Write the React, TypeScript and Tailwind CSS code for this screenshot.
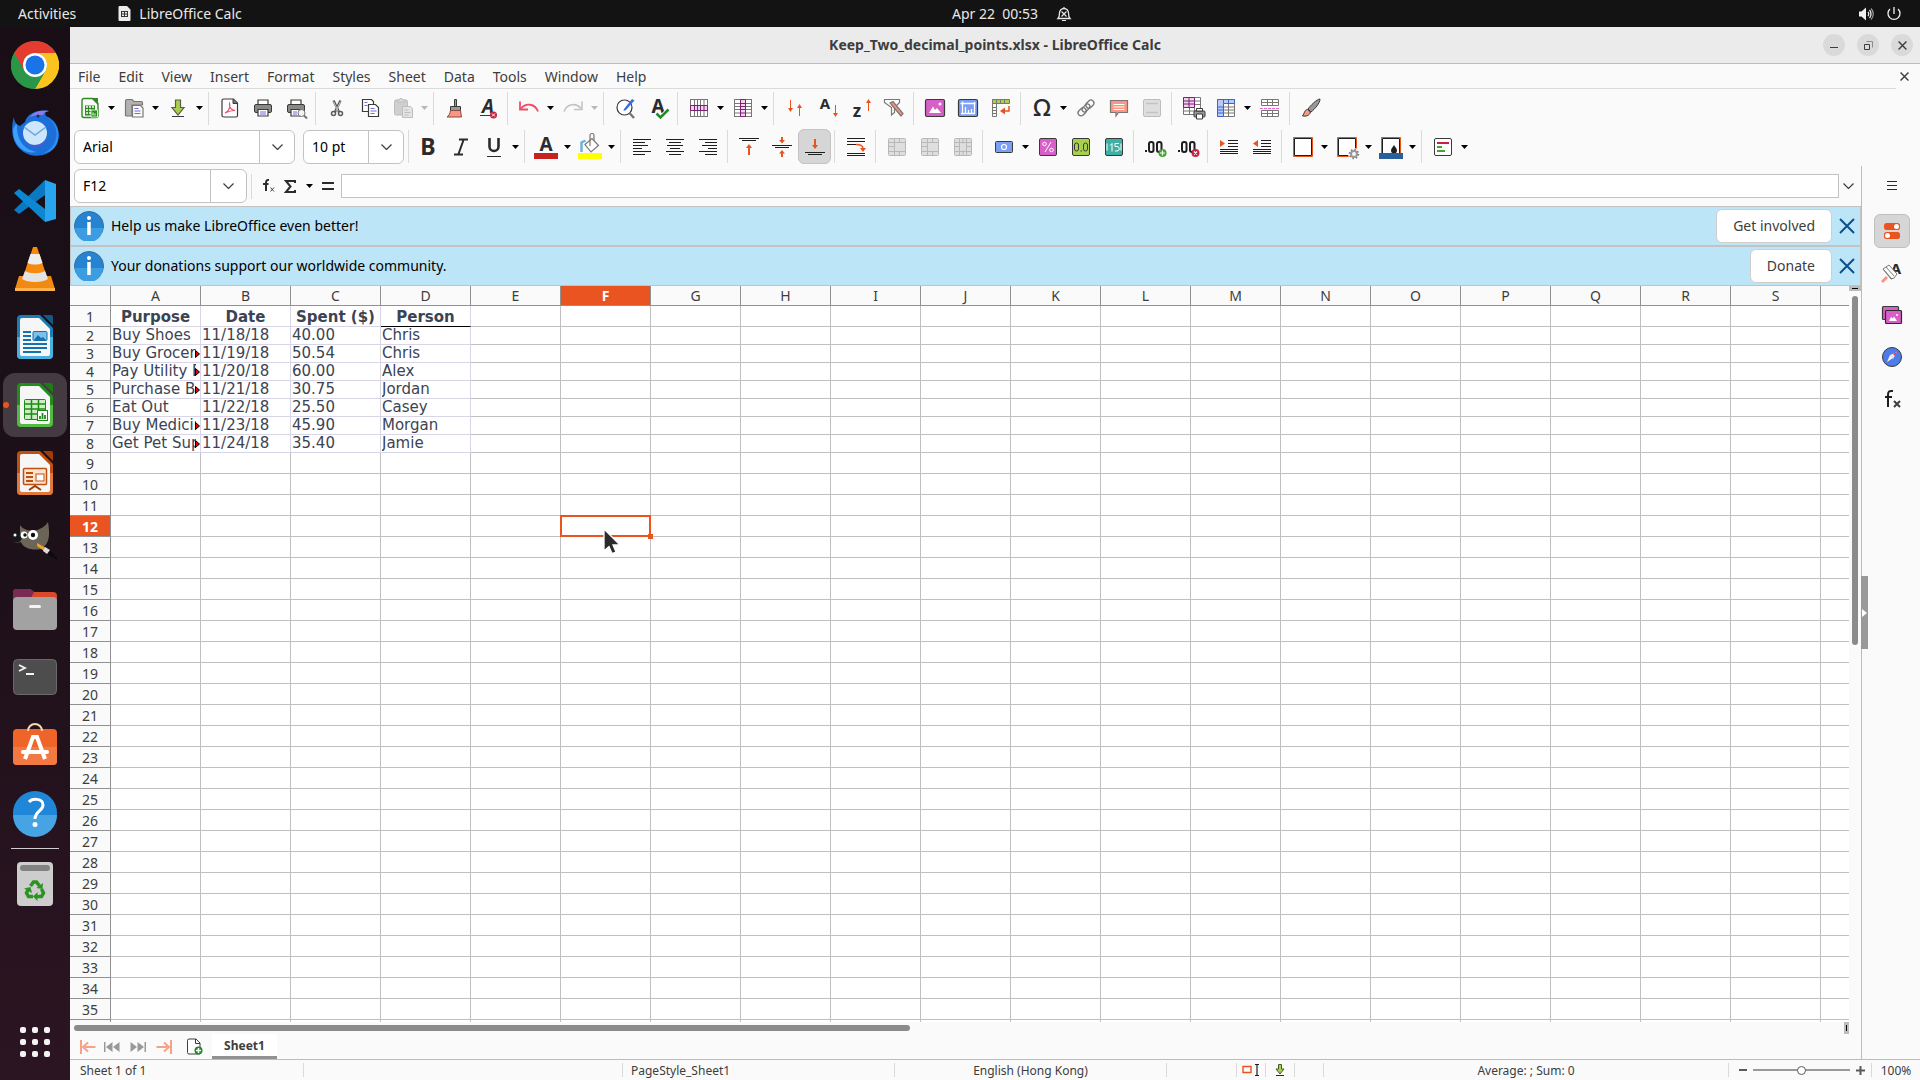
import { useState } from 'react';
import type { ReactNode } from 'react';
import { clsx } from 'clsx';

type IconProps = { children: ReactNode; size?: number };

function Icon({ children, size = 24 }: IconProps) {
  return (
    <svg width={size} height={size} viewBox="0 0 24 24" fill="none" aria-hidden="true" className="shrink-0 overflow-visible">
      {children}
    </svg>
  );
}

const DARK = '#3a3a38';
const MID = '#797774';
const RED = '#e9531f';

function Glyph({ x, y, size, children, fill = '#2b2b2b', italic = false, weight = 700 }: {
  x: number; y: number; size: number; children: ReactNode; fill?: string; italic?: boolean; weight?: number;
}) {
  return (
    <text
      x={x}
      y={y}
      fontSize={size}
      fill={fill}
      fontWeight={weight}
      fontStyle={italic ? 'italic' : 'normal'}
      textAnchor="middle"
      fontFamily="Noto Sans, sans-serif"
    >
      {children}
    </text>
  );
}

/* ---------- toolbar icons ---------- */

const icons = {
  newDoc: (
    <Icon>
      <path d="M6 2.500h9l5 5v12a2 2 0 0 1-2 2H6a2 2 0 0 1-2-2v-15a2 2 0 0 1 2-2z" fill="#fafafa" stroke="#2e8b20" strokeWidth="1.400" />
      <path d="M13 2h7v7z" fill="#2e8b20" />
      <path d="M7 9.500h10v10H7z" fill="#2e8b20" />
      <path d="M8 11h2m1 0h2m1 0h2M8 14h2m1 0h2m-5 3h2m1 0h2" stroke="#fff" strokeWidth="1.500" />
      <path d="M13 14h6.500v7H13z" fill="#2e8b20" stroke="#fff" strokeWidth=".8" />
      <path d="M15 19.500v-3m2 3v-2" stroke="#fff" />
    </Icon>
  ),
  open: (
    <Icon>
      <path d="M3.500 20V5c0-1 .5-1.500 1.500-1.500h5l2 2h7c1 0 1.500.5 1.500 1.500v2H10v11H5c-1 0-1.500-.5-1.500-1z" fill="#b3b1ae" stroke={MID} strokeWidth="1.200" />
      <path d="M10.500 9.500h8l2.500 2.500v9H10.500z" fill="#fafafa" stroke={MID} strokeWidth="1.200" />
      <path d="M12.500 12.500h4m-4 2.500h6m-6 2.500h6" stroke="#6e6edb" />
    </Icon>
  ),
  save: (
    <Icon>
      <path d="M9.500 4h5v7.500H18L12 19l-6-7.500h3.500z" fill="#a7d14c" stroke="#5b5b4a" strokeWidth="1.200" />
      <path d="M6 20.500h12" stroke={DARK} />
    </Icon>
  ),
  pdf: (
    <Icon>
      <path d="M5.500 3h10l4 4v12.500c0 1-.5 1.500-1.500 1.500H6c-1 0-2-.5-2-1.500V4.500C4 3.500 4.500 3 5.500 3z" fill="#fff" stroke={DARK} strokeWidth="1.200" />
      <path d="M15 3v4.500h4.500" fill="#777" stroke={DARK} />
      <path d="M7 17c3-1 6-6 4.500-9.500C11 11 13 14 17 14.500c-4 0-7 1-10 2.500z" stroke="#ee4d68" strokeWidth="1.200" />
    </Icon>
  ),
  print: (
    <Icon>
      <path d="M7 9V4h10v5" fill="#fff" stroke={DARK} strokeWidth="1.200" />
      <rect x="3.500" y="8.500" width="17" height="8" rx="1.500" fill="#8b8987" stroke={DARK} />
      <path d="M7 13.500h10V20H7z" fill="#fff" stroke={DARK} strokeWidth="1.200" />
      <path d="M9 16h6m-6 2h6" stroke="#6e6edb" />
    </Icon>
  ),
  preview: (
    <Icon>
      <path d="M7 9V4h10v5" fill="#fff" stroke={DARK} strokeWidth="1.200" />
      <rect x="3.500" y="8.500" width="17" height="8" rx="1.500" fill="#8b8987" stroke={DARK} />
      <path d="M7 13.500h10V20H7z" fill="#fff" stroke={DARK} strokeWidth="1.200" />
      <path d="M9 16h4m-4 2h4" stroke="#6e6edb" />
      <circle cx="17.500" cy="17" r="3.500" fill="#f4f4f4" stroke={MID} />
      <path d="m20 19.500 3 3" stroke={MID} strokeWidth="2" />
    </Icon>
  ),
  cut: (
    <Icon>
      <path d="M8.500 4.500 14 16m1.500-11.500L10 16" stroke="#5a5956" strokeWidth="2.400" />
      <path d="M8.500 5.500 13 15m2.500-9.500L11 15" stroke="#dedcd8" strokeWidth=".8" />
      <circle cx="8.500" cy="17.500" r="2" stroke="#5a5956" strokeWidth="1.500" />
      <circle cx="15.500" cy="17.500" r="2" stroke="#5a5956" strokeWidth="1.500" />
    </Icon>
  ),
  copy: (
    <Icon>
      <path d="M4.500 3.500h9l2 2v10h-11z" fill="#fff" stroke={DARK} strokeWidth="1.200" />
      <path d="M6.500 6.500h3m-3 3h3" stroke="#6e6edb" />
      <path d="M10.500 8.500h7l3 3v9h-10z" fill="#fff" stroke={DARK} strokeWidth="1.200" />
      <path d="M12.500 12.500h4m-4 2.500h6m-6 2.500h4" stroke="#6e6edb" />
    </Icon>
  ),
  paste: (
    <Icon>
      <rect x="3.500" y="4" width="13" height="15" rx="1.500" fill="#cfcfcf" stroke="#bdbdbd" />
      <path d="M6 6V4h2.500l.5-1.500h2l.5 1.500H14v2z" fill="#ddd" stroke="#bdbdbd" />
      <path d="M11.500 10.500h8l2 2v9h-10z" fill="#e4e4e4" stroke="#bdbdbd" />
      <path d="M13.500 14h4m-4 2.500h6m-6 2.500h4" stroke="#bdbdbd" />
    </Icon>
  ),
  brush: (
    <Icon>
      <path d="M11.500 3.500h2v7h-2z" fill="#999" stroke={DARK} />
      <path d="M7.500 10.500h10v4h-10z" fill="#999" stroke={DARK} />
      <path d="M7.500 14.500h10l1 6.500H4c2-1 3-3.500 3.500-6.500z" fill="#fc9684" stroke="#8b4a3e" />
    </Icon>
  ),
  clear: (
    <Icon>
      <Glyph x={12} y={17} size={19} italic>A</Glyph>
      <path d="M4 19.500h11" stroke={DARK} />
      <circle cx="17.500" cy="19" r="3.500" fill="#c9213f" />
      <path d="m16 17.500 3 3m0-3-3 3" stroke="#fff" />
    </Icon>
  ),
  undo: (
    <Icon>
      <path d="M3 5.500v8h8" stroke="#ee4d68" strokeWidth="1.800" />
      <path d="M4 12.500c5-6 14-5 17 3" stroke="#ee4d68" strokeWidth="1.800" />
    </Icon>
  ),
  redo: (
    <Icon>
      <path d="M21 5.500v8h-8" stroke="#c3c3c3" strokeWidth="1.600" />
      <path d="M20 12.500c-5-6-14-5-17 3" stroke="#c3c3c3" strokeWidth="1.600" />
    </Icon>
  ),
  find: (
    <Icon>
      <circle cx="11.500" cy="11.500" r="7.500" fill="#fff" stroke={DARK} strokeWidth="1.200" />
      <path d="m16.500 17 4.500 5" stroke={MID} strokeWidth="2.500" />
      <path d="m11 13 8-10 2.500 1.500L13 14l-2.500 1z" fill="#3a6be0" />
    </Icon>
  ),
  spell: (
    <Icon>
      <Glyph x={12} y={17} size={19}>A</Glyph>
      <path d="m10.500 17.500 4 4 8-8" stroke="#fff" strokeWidth="4.500" />
      <path d="m10.500 17.500 4 4 8-8" stroke="#218b2c" strokeWidth="2.600" />
    </Icon>
  ),
  row: (
    <Icon>
      <rect x="3.500" y="3.500" width="17" height="17" fill="#fff" stroke={MID} />
      <path d="M7.500 3.500v17m3-17v17m3-17v17m3.500-17v17" stroke={MID} />
      <path d="M3.500 9.500h17v5h-17z" fill="#f0d3ef" stroke="#7b2372" />
      <path d="M7.500 9.500v5m3-5v5m3-5v5m3.500-5v5" stroke="#7b2372" />
    </Icon>
  ),
  column: (
    <Icon>
      <rect x="3.500" y="3.500" width="17" height="17" fill="#fff" stroke={MID} />
      <path d="M3.500 7.500h17m-17 3h17m-17 3h17m-17 3.500h17" stroke={MID} />
      <path d="M9.500 3.500h5v17h-5z" fill="#f0d3ef" stroke="#7b2372" />
      <path d="M9.500 7.500h5m-5 3h5m-5 3h5m-5 3.500h5" stroke="#7b2372" />
    </Icon>
  ),
  sort: (
    <Icon>
      <path d="M7.500 4v11m9 5V9" stroke={RED} />
      <path d="M5 12h5l-2.500 4zM14 12h5l-2.500-4z" fill={RED} />
    </Icon>
  ),
  sortAsc: (
    <Icon>
      <Glyph x={9} y={13} size={15}>A</Glyph>
      <path d="M19.500 9v8" stroke={RED} />
      <path d="M17 17h5l-2.500 4z" fill={RED} />
    </Icon>
  ),
  sortDesc: (
    <Icon>
      <Glyph x={8} y={21} size={17}>z</Glyph>
      <path d="M19.500 7v8" stroke={RED} />
      <path d="M17 7h5l-2.500-4z" fill={RED} />
    </Icon>
  ),
  filter: (
    <Icon>
      <path d="M2.500 3.500h15v3l-5 5v5l-3 2.500v-7.500l-7-5z" fill="#fff" stroke={MID} strokeWidth="1.200" />
      <path d="m8 7 3-1.500 10 12-2 2.500z" fill="#f0907c" stroke={MID} strokeWidth="1.200" />
    </Icon>
  ),
  image: (
    <Icon>
      <rect x="2.500" y="3.500" width="19" height="17" rx="1.500" fill="#d85fc7" stroke={DARK} strokeWidth="1.200" />
      <path d="m6 17 4-6.500 2 3.500 2-2 4 5z" fill="#fff" />
      <circle cx="17" cy="8" r="1.500" fill="#fff" />
    </Icon>
  ),
  chart: (
    <Icon>
      <rect x="2.500" y="3.500" width="19" height="17" rx="1.500" fill="#7b9ff5" stroke={DARK} strokeWidth="1.200" />
      <path d="M6.500 5.500v13m-2-11h15M18.500 6v12M5 17.500h14M9.500 17v-6m3 6v-3m3 3v-4" stroke="#fff" strokeWidth="1.300" />
    </Icon>
  ),
  pivot: (
    <Icon>
      <path d="M3.500 3.500h17v4h-17z" fill="#a7d14c" stroke={MID} />
      <path d="M7.500 3.500v17h-4v-17m0 8h4m-4 3h4m-4 3h4m4-14v4m4-4v4" stroke={MID} />
      <path d="M20 10v5h-7" stroke={RED} strokeWidth="1.500" />
      <path d="m16 11.500-5 3.500 5 3.500z" fill={RED} />
    </Icon>
  ),
  omega: (
    <Icon>
      <Glyph x={12} y={20} size={24} weight={500}>Ω</Glyph>
    </Icon>
  ),
  link: (
    <Icon>
      <g stroke={MID} strokeWidth="1.300" transform="rotate(-45 12 12)">
        <rect x="2" y="9" width="9" height="6" rx="3" />
        <rect x="13" y="9" width="9" height="6" rx="3" />
        <rect x="7.500" y="9.500" width="9" height="5" rx="2.500" />
      </g>
    </Icon>
  ),
  comment: (
    <Icon>
      <path d="M3.500 4.500h17v12h-9L9 20v-3.500H3.500z" fill="#fc9684" stroke={MID} strokeWidth="1.200" />
      <path d="M6.500 8.500h11m-11 2.500h11m-11 2.500h11" stroke="#fff" />
    </Icon>
  ),
  headerFooter: (
    <Icon>
      <rect x="3.500" y="3.500" width="17" height="17" rx="1.500" fill="#dedede" stroke="#bdbdbd" />
      <path d="M6 7.500h12M6 16.500h12" stroke="#c3c3c3" strokeWidth="1.500" />
    </Icon>
  ),
  printRange: (
    <Icon>
      <path d="M2.500 1.500h17v17h-17z" fill="#fff" stroke={MID} />
      <path d="M2.500 5h17m-17 3.500h17M2.500 15h17M8.500 2v16m5-16v16" stroke={MID} />
      <path d="M2.500 1.500h11v10h-11z" fill="#f0d3ef" stroke="#7b2372" />
      <path d="M2.500 5h11m-11 3h11M8 2v9" stroke="#7b2372" />
      <rect x="13" y="15" width="11" height="6" rx="1" fill="#999" stroke={DARK} />
      <path d="M15.500 12.500h6V15h-6zM15.500 18h6v5h-6z" fill="#fff" stroke={DARK} />
    </Icon>
  ),
  freeze: (
    <Icon>
      <path d="M3.500 3.500h17v17h-17z" fill="#fff" stroke={MID} />
      <path d="M3.500 11h17m-17 3h17m-17 3h17M14.500 8v12" stroke={MID} />
      <path d="M3.500 3.500h17v4h-11v13h-6z" fill="#b9ccf8" stroke="#3a63d4" />
      <path d="M9.500 3.500v4m5-4v4M3.500 11h6m-6 3h6m-6 3h6" stroke="#3a63d4" />
    </Icon>
  ),
  split: (
    <Icon>
      <path d="M3.500 3.500h17v6h-17zM3.500 14.500h17v6h-17zM3.500 6.500h17m-17 11h17M9.500 3.500v6m5-6v6m-5 5v6m5-6v6" fill="#fff" stroke={MID} />
      <path d="M2 12.500h20" stroke="#e36ad4" strokeDasharray="3 1" />
    </Icon>
  ),
  draw: (
    <Icon>
      <path d="M21 3c-3 0-10 7-12 10l3 3c4-3 9-9 9-13z" fill="#999" stroke={DARK} />
      <path d="M8.500 13.500c-3 0-3 4-5 6.500 3 .5 7 0 8-4z" fill="#fc9684" stroke={DARK} />
    </Icon>
  ),
  bold: (
    <Icon>
      <Glyph x={12} y={20} size={23}>B</Glyph>
    </Icon>
  ),
  italic: (
    <Icon>
      <path d="M10 4.500h9M5 19.500h9M14.500 5l-5 14" stroke="#2b2b2b" strokeWidth="2" />
    </Icon>
  ),
  underline: (
    <Icon>
      <path d="M7.500 3v8.500a4.500 4.500 0 0 0 9 0V3" stroke="#2b2b2b" strokeWidth="2.600" />
      <path d="M5 21.500h14" stroke="#2b2b2b" />
    </Icon>
  ),
  fontColor: (
    <Icon>
      <Glyph x={12} y={16} size={19}>A</Glyph>
      <path d="M0 18h24v6H0z" fill="#c9211e" />
    </Icon>
  ),
  highlight: (
    <Icon>
      <path d="M3.500 17V7.500l4-2" stroke="#6bb3dd" strokeWidth="2.500" />
      <path d="m7 9.500 7-6 6.500 7L13 17z" fill="#fff" stroke={MID} strokeWidth="1.200" />
      <path d="M12 11V.5a2 2 0 0 1 4 0V6" stroke={MID} strokeWidth="1.200" />
      <path d="M0 18h24v6H0z" fill="#ffff00" />
    </Icon>
  ),
  alignLeft: (
    <Icon>
      <path d="M3 4.500h18M3 7.500h12M3 10.500h15M3 13.500h9M3 16.500h18M3 19.500h12" stroke="#1e1e1e" />
    </Icon>
  ),
  alignCenter: (
    <Icon>
      <path d="M3 4.500h18M6 7.500h12M4 10.500h16M7 13.500h10M3 16.500h18M6 19.500h12" stroke="#1e1e1e" />
    </Icon>
  ),
  alignRight: (
    <Icon>
      <path d="M3 4.500h18M9 7.500h12M6 10.500h15M12 13.500h9M3 16.500h18M9 19.500h12" stroke="#1e1e1e" />
    </Icon>
  ),
  alignTop: (
    <Icon>
      <path d="M2 3.500h20M5 5.500h14" stroke="#1e1e1e" />
      <path d="M12 20v-8" stroke={RED} strokeWidth="2" />
      <path d="M9 13h6l-3-4z" fill={RED} />
    </Icon>
  ),
  alignMiddle: (
    <Icon>
      <path d="M2 10.500h20M5 12.500h14" stroke="#1e1e1e" />
      <path d="M12 2v3m0 17v-4" stroke={RED} strokeWidth="2" />
      <path d="M9 5h6l-3 3.500zM9 18.500h6L12 15z" fill={RED} />
    </Icon>
  ),
  alignBottom: (
    <Icon>
      <path d="M2 17.500h20M5 19.500h14" stroke="#1e1e1e" />
      <path d="M12 4v7" stroke={RED} strokeWidth="2" />
      <path d="M9 10h6l-3 4z" fill={RED} />
    </Icon>
  ),
  wrap: (
    <Icon>
      <path d="M3 3.500h18M3 6.500h18M3 9.500h10M3 18.500h18M3 20.500h18" stroke="#1e1e1e" />
      <path d="M12 9.500c4 0 7 .5 7 4" stroke={RED} strokeWidth="1.500" />
      <path d="M16 13h6l-3 4z" fill={RED} />
    </Icon>
  ),
  merge: (
    <Icon>
      <rect x="3.500" y="3.500" width="17" height="17" rx="1" fill="#dedede" stroke="#b8b8b8" />
      <path d="M3.500 7.500h17m-11-4v17m-6-9h6m-6 5h6m5-13v4M9.500 16.500h11m-6 0v4" stroke="#b8b8b8" />
    </Icon>
  ),
  unmerge: (
    <Icon>
      <rect x="3.500" y="3.500" width="17" height="17" rx="1" fill="#dedede" stroke="#b8b8b8" />
      <path d="M3.500 7.500h17M3.500 16.500h17M8.500 3.500v17m7-17v17m-12-9h5m7 0h5m-8.500-8v5m0 7v5" stroke="#b8b8b8" />
    </Icon>
  ),
  currency: (
    <Icon>
      <rect x="3.500" y="6.500" width="17" height="11" rx="1" fill="#7b9ff5" stroke={DARK} />
      <circle cx="12" cy="12" r="2.500" stroke="#fff" strokeWidth="1.200" />
    </Icon>
  ),
  percent: (
    <Icon>
      <rect x="3.500" y="3.500" width="17" height="17" rx="1.500" fill="#d85fc7" stroke={DARK} />
      <circle cx="8.500" cy="9" r="1.800" stroke="#fff" />
      <circle cx="15.500" cy="15" r="1.800" stroke="#fff" />
      <path d="m15 7-6 10" stroke="#fff" />
    </Icon>
  ),
  number: (
    <Icon>
      <rect x="3.500" y="3.500" width="17" height="17" rx="1.500" fill="#a7d14c" stroke={DARK} />
      <rect x="5.500" y="8" width="4" height="8" rx="2" stroke={DARK} />
      <rect x="14.500" y="8" width="4" height="8" rx="2" stroke={DARK} />
      <path d="M11.500 16h1.500" stroke={DARK} />
    </Icon>
  ),
  date: (
    <Icon>
      <rect x="3.500" y="3.500" width="17" height="17" rx="1.500" fill="#40b0a6" stroke={DARK} />
      <path d="M5 8.500v7m14-7v7m-11-5 2-2v8m7-8h-4v3h2a2 2 0 0 1 0 4.500h-2" stroke="#fff" />
    </Icon>
  ),
  addDecimal: (
    <Icon>
      <path d="M2 16h2" stroke="#1e1e1e" strokeWidth="2" />
      <rect x="6" y="7" width="4.500" height="10" rx="2" stroke="#1e1e1e" strokeWidth="2" />
      <rect x="14" y="7" width="4.500" height="10" rx="2" stroke="#1e1e1e" strokeWidth="2" />
      <circle cx="19.500" cy="18" r="4" fill="#43a52f" />
      <path d="M17 18h5m-2.500-2.500v5" stroke="#fff" strokeWidth="1.200" />
    </Icon>
  ),
  removeDecimal: (
    <Icon>
      <path d="M2 16h2" stroke="#1e1e1e" strokeWidth="2" />
      <rect x="6" y="7" width="4.500" height="10" rx="2" stroke="#1e1e1e" strokeWidth="2" />
      <rect x="14" y="7" width="4.500" height="10" rx="2" stroke="#1e1e1e" strokeWidth="2" />
      <circle cx="19.500" cy="18" r="4" fill="#c9213f" />
      <path d="m18 16.500 3 3m0-3-3 3" stroke="#fff" strokeWidth="1.200" />
    </Icon>
  ),
  indentMore: (
    <Icon>
      <path d="M11 5.500h10M11 8.500h10M11 11.500h10M3 14.500h18M3 16.500h18M3 18.500h18" stroke="#1e1e1e" />
      <path d="m3 5 5 3.500L3 12z" fill={RED} />
    </Icon>
  ),
  indentLess: (
    <Icon>
      <path d="M11 5.500h10M11 8.500h10M11 11.500h10M3 14.500h18M3 16.500h18M3 18.500h18" stroke="#1e1e1e" />
      <path d="M8 5 3 8.500 8 12z" fill={RED} />
    </Icon>
  ),
  borders: (
    <Icon>
      <path d="M2.500 2.500h19v19h-19z" fill="#fff" stroke={RED} />
      <path d="M3.500 3.500h17v17h-17z" stroke="#1e1e1e" />
    </Icon>
  ),
  borderStyle: (
    <Icon>
      <path d="M2.500 2.500h19v19h-19z" fill="#fff" stroke={RED} />
      <path d="M3.500 3.500h17v17h-17z" stroke="#1e1e1e" />
      <circle cx="19" cy="19" r="6" fill="#fafafa" />
      <circle cx="19" cy="19" r="3" stroke="#999" strokeWidth="2" />
      <circle cx="19" cy="19" r="4.500" stroke={MID} strokeDasharray="1.500 2" strokeWidth="1.500" />
    </Icon>
  ),
  borderColor: (
    <Icon>
      <path d="M2.500 2.500h19v19h-19z" fill="#fff" stroke={RED} />
      <path d="M3.500 3.500h17v17h-17z" stroke="#1e1e1e" />
      <path d="M15 10c2 3 3 4 3 5.500a3 3 0 0 1-6 0c0-1.500 1-2.500 3-5.500z" fill="#1e1e1e" />
      <path d="M0 18h24v6H0z" fill="#2a6099" />
    </Icon>
  ),
  conditional: (
    <Icon>
      <rect x="3.500" y="3.500" width="17" height="17" rx="1.500" fill="#fff" stroke={DARK} />
      <path d="M6 8h12" stroke="#c9213f" strokeWidth="2" />
      <path d="M6 12h5m-5 4h8" stroke="#43a52f" strokeWidth="2" />
    </Icon>
  ),
};

type Tool = { label: string; icon: ReactNode; menu?: boolean; off?: boolean; on?: boolean };

const standardTools: Tool[][] = [
  [
    { label: 'New', icon: icons.newDoc, menu: true },
    { label: 'Open', icon: icons.open, menu: true },
    { label: 'Save', icon: icons.save, menu: true },
  ],
  [
    { label: 'Export as PDF', icon: icons.pdf },
    { label: 'Print', icon: icons.print },
    { label: 'Print preview', icon: icons.preview },
  ],
  [
    { label: 'Cut', icon: icons.cut },
    { label: 'Copy', icon: icons.copy },
    { label: 'Paste', icon: icons.paste, menu: true, off: true },
  ],
  [
    { label: 'Clone formatting', icon: icons.brush },
    { label: 'Clear formatting', icon: icons.clear },
  ],
  [
    { label: 'Undo', icon: icons.undo, menu: true },
    { label: 'Redo', icon: icons.redo, menu: true, off: true },
  ],
  [
    { label: 'Find and replace', icon: icons.find },
    { label: 'Spelling', icon: icons.spell },
  ],
  [
    { label: 'Row', icon: icons.row, menu: true },
    { label: 'Column', icon: icons.column, menu: true },
  ],
  [
    { label: 'Sort', icon: icons.sort },
    { label: 'Sort ascending', icon: icons.sortAsc },
    { label: 'Sort descending', icon: icons.sortDesc },
    { label: 'AutoFilter', icon: icons.filter },
  ],
  [
    { label: 'Insert image', icon: icons.image },
    { label: 'Insert chart', icon: icons.chart },
    { label: 'Pivot table', icon: icons.pivot },
  ],
  [
    { label: 'Special character', icon: icons.omega, menu: true },
    { label: 'Hyperlink', icon: icons.link },
    { label: 'Comment', icon: icons.comment },
    { label: 'Headers and footers', icon: icons.headerFooter, off: true },
  ],
  [
    { label: 'Define print area', icon: icons.printRange },
    { label: 'Freeze rows and columns', icon: icons.freeze, menu: true },
    { label: 'Split window', icon: icons.split },
  ],
  [{ label: 'Show draw functions', icon: icons.draw }],
];

const formattingTools: Tool[][] = [
  [
    { label: 'Bold', icon: icons.bold },
    { label: 'Italic', icon: icons.italic },
    { label: 'Underline', icon: icons.underline, menu: true },
  ],
  [
    { label: 'Font color', icon: icons.fontColor, menu: true },
    { label: 'Background color', icon: icons.highlight, menu: true },
  ],
  [
    { label: 'Align left', icon: icons.alignLeft },
    { label: 'Center horizontally', icon: icons.alignCenter },
    { label: 'Align right', icon: icons.alignRight },
  ],
  [
    { label: 'Align top', icon: icons.alignTop },
    { label: 'Center vertically', icon: icons.alignMiddle },
    { label: 'Align bottom', icon: icons.alignBottom, on: true },
  ],
  [{ label: 'Wrap text', icon: icons.wrap }],
  [
    { label: 'Merge and center', icon: icons.merge, off: true },
    { label: 'Merge cells', icon: icons.merge, off: true },
    { label: 'Unmerge cells', icon: icons.unmerge, off: true },
  ],
  [
    { label: 'Format as currency', icon: icons.currency, menu: true },
    { label: 'Format as percent', icon: icons.percent },
    { label: 'Format as number', icon: icons.number },
    { label: 'Format as date', icon: icons.date },
  ],
  [
    { label: 'Add decimal place', icon: icons.addDecimal },
    { label: 'Delete decimal place', icon: icons.removeDecimal },
  ],
  [
    { label: 'Increase indent', icon: icons.indentMore },
    { label: 'Decrease indent', icon: icons.indentLess },
  ],
  [
    { label: 'Borders', icon: icons.borders, menu: true },
    { label: 'Border style', icon: icons.borderStyle, menu: true },
    { label: 'Border color', icon: icons.borderColor, menu: true },
  ],
  [{ label: 'Conditional formatting', icon: icons.conditional, menu: true }],
];

function Caret({ off }: { off?: boolean }) {
  return (
    <svg width="7" height="4" viewBox="0 0 7 4" aria-hidden="true">
      <path d="M0 0h7L3.500 4z" fill={off ? '#b8b8b8' : '#000'} />
    </svg>
  );
}

function Chevron() {
  return (
    <svg width="11" height="6" viewBox="0 0 11 6" fill="none" aria-hidden="true">
      <path d="m.5.5 5 5 5-5" stroke="#3d3d3d" strokeWidth="1.200" />
    </svg>
  );
}

function Cross({ size, color, width = 1.5 }: { size: number; color: string; width?: number }) {
  return (
    <svg width={size} height={size} viewBox="0 0 16 16" fill="none" aria-hidden="true">
      <path d="m1 1 14 14M15 1 1 15" stroke={color} strokeWidth={width} />
    </svg>
  );
}

function Separator() {
  return <div className="mr-1 ml-[3px] h-[33px] w-px shrink-0 bg-[#dadada]" />;
}

function ToolGroups({ groups }: { groups: Tool[][] }) {
  return (
    <>
      {groups.map((group, i) => (
        <div key={i} className="flex items-center">
          {i > 0 && <Separator />}
          {group.map((tool) => (
            <div key={tool.label} className="flex items-center">
              <button
                aria-label={tool.label}
                disabled={tool.off}
                className={clsx(
                  'flex h-[35px] w-[33px] items-center justify-center rounded-md',
                  tool.on && 'border border-[#c3c3c3] bg-[#d6d6d6]',
                )}
              >
                {tool.icon}
              </button>
              {tool.menu && (
                <button aria-label={tool.label + ' options'} disabled={tool.off} className="flex h-8 w-[11px] items-center justify-center">
                  <Caret off={tool.off} />
                </button>
              )}
            </div>
          ))}
        </div>
      ))}
    </>
  );
}

/* ---------- desktop ---------- */

function TopBar() {
  return (
    <header className="flex h-[27px] shrink-0 items-center bg-[#131313] text-sm text-[#e8e8e8]">
      <div className="flex w-1/2 items-center pl-[18px]">
        <button>Activities</button>
        <button className="ml-[42px] flex items-center gap-2">
          <svg width="13" height="15" viewBox="0 0 13 15" aria-hidden="true">
            <path d="M1.500 0H9l3.500 3.500V14a1 1 0 0 1-1 1h-10a1 1 0 0 1-1-1V1a1 1 0 0 1 1-1z" fill="#ececec" />
            <path d="M3 5.500h7M3 8h7M3 10.500h7M3.500 5v6m3-6v6m3-6v6" stroke="#333" fill="none" />
          </svg>
          LibreOffice Calc
        </button>
      </div>
      <button className="-ml-2 flex items-center gap-[18px]">
        <span className="whitespace-pre">Apr 22  00:53</span>
        <svg width="16" height="16" viewBox="0 0 16 16" fill="none" stroke="#e8e8e8" aria-hidden="true">
          <path d="M2 12.500h12c-1.500-1.500-1.500-3-1.500-5.500A4.500 4.500 0 0 0 8 2.500 4.500 4.500 0 0 0 3.500 7c0 2.500 0 4-1.500 5.500z" strokeWidth="1.300" />
          <path d="M6 14.500h4M8 2.500V1M5.500 5.500l5 5m0-5-5 5" strokeWidth="1.200" />
        </svg>
      </button>
      <div className="ml-auto flex items-center gap-3 pr-[18px]">
        <svg width="16" height="16" viewBox="0 0 16 16" fill="none" aria-label="Volume">
          <path d="M1 5.500h2.500L8 1.500v13l-4.500-4H1z" fill="#f0f0f0" />
          <path d="M10 6c1 1 1 3 0 4m1.500-6c2 2 2 6 0 8" stroke="#f0f0f0" strokeWidth="1.300" />
          <path d="M13 2.500c3 3 3 8 0 11" stroke="#999" strokeWidth="1.200" />
        </svg>
        <svg width="16" height="16" viewBox="0 0 16 16" fill="none" stroke="#f0f0f0" strokeWidth="1.300" aria-label="Power">
          <path d="M4 3a6 6 0 1 0 8 0M8 1v7" />
        </svg>
      </div>
    </header>
  );
}

function OfficeIcon({ dark, main, light, children }: { dark: string; main: string; light: string; children: ReactNode }) {
  return (
    <svg width="48" height="48" viewBox="0 0 48 48" fill="none" aria-hidden="true">
      <path d="M10 2h19l13 13v27a4 4 0 0 1-4 4H10a4 4 0 0 1-4-4V6a4 4 0 0 1 4-4z" fill={main} />
      <path d="M6 24h36v18a4 4 0 0 1-4 4H10a4 4 0 0 1-4-4z" fill={light} />
      <path d="M11 5h17l11 11v25a2 2 0 0 1-2 2H11a2 2 0 0 1-2-2V7a2 2 0 0 1 2-2z" fill="#f6f6f6" />
      <path d="M32 2h8a2 2 0 0 1 2 2v8z" fill={dark} />
      {children}
    </svg>
  );
}

const dockApps: { name: string; icon: ReactNode; active?: boolean }[] = [
  {
    name: 'Google Chrome',
    icon: (
      <svg width="48" height="48" viewBox="0 0 48 48" aria-hidden="true">
        <circle cx="24" cy="24" r="24" fill="#2b9548" />
        <path d="M3.200 12A24 24 0 0 1 44.800 12H24a12 12 0 0 0-10.400 18z" fill="#e43d30" />
        <path d="M44.800 12A24 24 0 0 1 24 48l10.400-18A12 12 0 0 0 24 12z" fill="#fcc31e" />
        <path d="M3.200 12A24 24 0 0 0 24 48l10.400-18a12 12 0 0 1-20.800 0z" fill="#2b9548" />
        <circle cx="24" cy="24" r="12" fill="#fff" />
        <circle cx="24" cy="24" r="9.500" fill="#1a73e8" />
      </svg>
    ),
  },
  {
    name: 'Thunderbird',
    icon: (
      <svg width="48" height="48" viewBox="0 0 48 48" aria-hidden="true">
        <path d="M3 8c0 5 3 8 6 9l5-4c2-8 12-13 24-11-5 1-4 3-3 5 14 6 16 21 9 31-8 11-26 12-36 1C0 31 0 17 3 8z" fill="#1c6fd8" />
        <path d="M36 8c13 8 13 28-3 36 12-1 17-14 13-25-2-6-6-9-10-11z" fill="#2c8df0" />
        <path d="M6 15c-1 15 7 26 20 28C12 46 2 35 2 22c0-3 2-6 4-7z" fill="#3fa0f7" />
        <path d="M19 8c4-6 12-7 19-6-6 1-5 3-6 4-4 0-8 0-13 2z" fill="#8d7bea" />
        <ellipse cx="24" cy="24" rx="12" ry="12" fill="#cde6fb" />
        <path d="m13 18 11 8 11-8" fill="none" stroke="#6ba6dd" strokeWidth="1.500" />
        <path d="M14 34c9 4 18 2 23-6-1 9-13 15-23 6z" fill="#5a55cf" opacity=".6" />
        <circle cx="27" cy="7" r="1.500" fill="#0d2f68" />
      </svg>
    ),
  },
  {
    name: 'Visual Studio Code',
    icon: (
      <svg width="48" height="48" viewBox="0 0 48 48" aria-hidden="true">
        <path d="M34 3 3 33l5 4 26-19z" fill="#0a79c2" />
        <path d="M3 16l5-4 26 20v13z" fill="#0d87d0" />
        <path d="M34 3l11 4v35l-11 3z" fill="#29a4ee" />
      </svg>
    ),
  },
  {
    name: 'VLC media player',
    icon: (
      <svg width="48" height="48" viewBox="0 0 48 48" aria-hidden="true">
        <path d="M8 31h32l4 13H4z" fill="#f08a12" />
        <path d="M4 43h40v3H4z" fill="#fdb24a" />
        <path d="M22 2h4l11 33c-4 5-22 5-26 0z" fill="#f58a0c" />
        <path d="M19.500 9h9l3 9c-4 2-11 2-15 0z" fill="#eeeeee" />
        <path d="M14 26c5 3 15 3 20 0l3 8c-6 4-20 4-26 0z" fill="#e3e3e3" />
      </svg>
    ),
  },
  {
    name: 'LibreOffice Writer',
    icon: (
      <OfficeIcon dark="#115a86" main="#1b7db5" light="#49b0e0">
        <path d="M12 19h8m-8 4h8m-8 4h8m-8 4h24m-24 4h24m-24 4h18" stroke="#1273b0" strokeWidth="2" />
        <rect x="22" y="18.500" width="14" height="9" rx="1" fill="#7cc1ea" stroke="#1273b0" />
        <path d="m23 27 4-5 3 3 2-1 3 3z" fill="#1273b0" />
      </OfficeIcon>
    ),
  },
  {
    name: 'LibreOffice Calc',
    active: true,
    icon: (
      <OfficeIcon dark="#1d7a16" main="#238d1b" light="#53bb41">
        <rect x="13.500" y="18.500" width="21" height="20" rx="1" fill="#cdeec4" stroke="#1d8a16" />
        <path d="M13.500 23h21m-21 5h21m-21 5h21m-14-14v19m7-19v19" stroke="#1d8a16" strokeWidth="1.500" />
        <rect x="26.500" y="29.500" width="10" height="10" fill="#fff" stroke="#1d8a16" />
        <path d="M29 38v-3m2.500 3v-6m2.500 6v-4" stroke="#1d8a16" strokeWidth="1.800" />
      </OfficeIcon>
    ),
  },
  {
    name: 'LibreOffice Impress',
    icon: (
      <OfficeIcon dark="#a13d08" main="#c0500f" light="#e0793a">
        <rect x="12.500" y="19.500" width="23" height="16" rx="1" fill="#fbe3d0" stroke="#c0500f" strokeWidth="1.500" />
        <path d="M15 24h7m-7 4h7m-7 4h7" stroke="#c0500f" strokeWidth="2" />
        <rect x="25" y="25" width="8" height="7" fill="#fff" stroke="#c0500f" />
        <path d="m18 41 6-4 6 4" stroke="#9a3d08" strokeWidth="2" />
      </OfficeIcon>
    ),
  },
  {
    name: 'GIMP',
    icon: (
      <svg width="48" height="48" viewBox="0 0 48 48" aria-hidden="true">
        <path d="M9 8c4 7 20 9 28-3 2 12 2 22-7 27-9 2-18-1-20-7-5 2-9 0-9-5 1-3 4-5 8-2z" fill="#6b6557" />
        <ellipse cx="5.500" cy="20" rx="5.500" ry="5.500" fill="#15171a" />
        <circle cx="4" cy="18" r="1.500" fill="#fff" />
        <circle cx="13" cy="18" r="3.500" fill="#fff" />
        <circle cx="22" cy="18" r="5" fill="#fff" />
        <circle cx="14" cy="18" r="1.700" fill="#111" />
        <circle cx="22" cy="18" r="2.200" fill="#111" />
        <path d="m26 26 9 5-2 3-7-5z" fill="#f0a030" />
        <path d="m34 31 5 2 7 8v2l-9-5-4-4z" fill="#0c0c0c" />
        <path d="m34 30 5 3-3 4-4-3z" fill="#ddd" />
      </svg>
    ),
  },
  {
    name: 'Files',
    icon: (
      <svg width="48" height="48" viewBox="0 0 48 48" aria-hidden="true">
        <path d="M2 18V8a4 4 0 0 1 4-4h13l4 3h19a4 4 0 0 1 4 4v10z" fill="#d84a2a" />
        <path d="M2 18V8a4 4 0 0 1 4-4h13l4 3-6 12z" fill="#7b2a52" />
        <rect x="2" y="12" width="44" height="33" rx="4" fill="#a2a2a2" />
        <rect x="18" y="20" width="12" height="3" rx="1.500" fill="#f4f4f4" />
      </svg>
    ),
  },
  {
    name: 'Terminal',
    icon: (
      <svg width="48" height="48" viewBox="0 0 48 48" fill="none" aria-hidden="true">
        <rect x="2.500" y="6.500" width="43" height="35" rx="4" fill="#4d4d4d" stroke="#6a6a6a" />
        <path d="m8 12 6 3-6 3M15 21h8" stroke="#f4f4f4" strokeWidth="1.800" />
      </svg>
    ),
  },
  {
    name: 'Ubuntu Software',
    icon: (
      <svg width="48" height="48" viewBox="0 0 48 48" fill="none" aria-hidden="true">
        <rect x="2" y="8" width="44" height="36" rx="4" fill="#ef6428" />
        <path d="M2 26h44v14a4 4 0 0 1-4 4H6a4 4 0 0 1-4-4z" fill="#f27a42" />
        <path d="M17 10a7 7 0 0 1 14 0" stroke="#f7d9a8" strokeWidth="2" />
        <path d="m14 38 8-22h4l8 22" stroke="#fff" strokeWidth="4" />
        <path d="M12 31h24" stroke="#fff" strokeWidth="4" strokeLinecap="round" />
      </svg>
    ),
  },
  {
    name: 'Help',
    icon: (
      <svg width="48" height="48" viewBox="0 0 48 48" fill="none" aria-hidden="true">
        <circle cx="24" cy="24" r="22" fill="#2086d8" />
        <path d="M2 26a22 22 0 0 0 44 0z" fill="#46a3e4" />
        <path d="M18 13c3-4 14-4 14 3 0 6-8 6-8 14" stroke="#fff" strokeWidth="3" />
        <circle cx="24" cy="35.500" r="2.500" fill="#fff" />
      </svg>
    ),
  },
];

function Dock() {
  return (
    <nav aria-label="Dock" className="flex w-[70px] shrink-0 flex-col items-center gap-1 bg-linear-to-b from-[#190e16] via-[#1d1019] to-[#2c1522] pt-[6px] pb-[6px]">
      {dockApps.map((app) => (
        <button
          key={app.name}
          aria-label={app.name}
          className={clsx('relative flex size-16 shrink-0 items-center justify-center rounded-xl', app.active && 'bg-[#443b42]')}
        >
          {app.icon}
          {app.active && <span className="absolute left-0 size-[6px] rounded-full bg-[#e95420]" />}
        </button>
      ))}
      <div className="-my-px h-px w-12 shrink-0 bg-[#d0cdd0]" />
      <button aria-label="Trash" className="flex size-16 shrink-0 items-center justify-center">
        <svg width="48" height="48" viewBox="0 0 48 48" fill="none" aria-hidden="true">
          <rect x="6" y="2" width="36" height="44" rx="4" fill="#cdcdcd" />
          <rect x="9" y="5" width="30" height="6" rx="3" fill="#828282" />
          <g stroke="#2b9322" strokeWidth="3.500">
            <path d="m19.500 26 3-4h3l3 4" />
            <path d="m30.500 29 2 4-2 3.500H26" />
            <path d="m17.500 29-2 4 2 3.500H22" />
          </g>
          <path d="m25.500 28 6 1 .5-6zM26.500 32v9l-4.500-4.500zM13 28.500l6.500-1.500 1.500 6z" fill="#2b9322" />
        </svg>
      </button>
      <button aria-label="Show applications" className="mt-auto grid size-16 shrink-0 grid-cols-[6px_6px_6px] place-content-center gap-[6px]">
        {Array.from({ length: 9 }, (_, i) => (
          <span key={i} className="size-[6px] rounded-[2px] bg-[#f4f4f4]" />
        ))}
      </button>
    </nav>
  );
}

/* ---------- window ---------- */

function TitleBar() {
  return (
    <div className="grid h-[37px] shrink-0 grid-cols-[1fr_auto_1fr] items-center border-b border-[#bcbcbc] bg-[#ebebeb]">
      <div />
      <h1 className="text-sm font-bold text-[#3d3d3d]">Keep_Two_decimal_points.xlsx - LibreOffice Calc</h1>
      <div className="flex justify-end gap-3 pr-[7px]">
        <button aria-label="Minimize" className="flex size-[22px] items-center justify-center rounded-full bg-[#dadada]">
          <span className="mt-1 h-px w-2 bg-[#3d3d3d]" />
        </button>
        <button aria-label="Restore" className="flex size-[22px] items-center justify-center rounded-full bg-[#dadada]">
          <svg width="9" height="9" viewBox="0 0 9 9" fill="none" stroke="#3d3d3d" aria-hidden="true">
            <path d="M.5 3.500h5v5h-5z" />
            <path d="M2.500.5h6v6" stroke="#8a8a8a" />
          </svg>
        </button>
        <button aria-label="Close" className="flex size-[22px] items-center justify-center rounded-full bg-[#dadada]">
          <Cross size={9} color="#3d3d3d" width={2.5} />
        </button>
      </div>
    </div>
  );
}

const menus = ['File', 'Edit', 'View', 'Insert', 'Format', 'Styles', 'Sheet', 'Data', 'Tools', 'Window', 'Help'];

function MenuBar() {
  return (
    <div className="flex h-[25px] shrink-0 text-sm text-[#3d3d3d]">
      <div className="flex flex-1 items-center gap-[2px] border-b border-[#dadada] pt-px">
        {menus.map((menu) => (
          <button key={menu} className="px-2">{menu}</button>
        ))}
      </div>
      <button aria-label="Close document" className="flex w-6 items-center pl-1">
        <Cross size={9} color="#3d3d3d" width={2.5} />
      </button>
    </div>
  );
}

function FormulaBar() {
  const [cell, setCell] = useState('F12');
  const [formula, setFormula] = useState('');

  return (
    <div className="flex h-10 shrink-0 items-center pl-1">
      <div className="flex h-[34px] w-[173px] overflow-hidden rounded-md border border-[#c3c3c3] bg-white">
        <input
          aria-label="Name box"
          value={cell}
          onChange={(e) => setCell(e.target.value)}
          className="min-w-0 flex-1 pl-2 text-sm text-black outline-none"
        />
        <button aria-label="Manage names" className="flex w-9 items-center justify-center border-l border-[#c3c3c3]">
          <Chevron />
        </button>
      </div>
      <div className="ml-1 h-[25px] w-px bg-[#dadada]" />
      <button aria-label="Function wizard" className="ml-2 flex w-[18px] items-center justify-center">
        <svg width="14" height="16" viewBox="0 0 14 16" fill="none" aria-hidden="true">
          <path d="M7 2C4.500 1.500 4 3 4 5v8M1 6h5.500" stroke="#2b2b2b" strokeWidth="2" />
          <path d="m8.500 9.500 3.500 4m0-4-3.500 4" stroke="#444" />
        </svg>
      </button>
      <button aria-label="Select function" className="flex w-6 items-center justify-center">
        <svg width="12" height="13" viewBox="0 0 12 13" fill="none" aria-hidden="true">
          <path d="M11 3V1H2l4.500 5.500L2 12h9v-2" stroke="#2b2b2b" strokeWidth="2" />
        </svg>
      </button>
      <button aria-label="Function options" className="ml-[2px] flex w-[11px] items-center justify-center">
        <Caret />
      </button>
      <button aria-label="Formula" className="flex w-[26px] flex-col items-center gap-1">
        <span className="h-[2px] w-3 bg-[#2b2b2b]" />
        <span className="h-[2px] w-3 bg-[#2b2b2b]" />
      </button>
      <input
        aria-label="Input line"
        value={formula}
        onChange={(e) => setFormula(e.target.value)}
        className="h-6 min-w-0 flex-1 border border-[#c3c3c3] bg-white px-1 text-sm outline-none"
      />
      <button aria-label="Expand formula bar" className="flex w-[22px] items-center justify-center pr-1">
        <Chevron />
      </button>
    </div>
  );
}

function InfoBar({ text, action }: { text: string; action: string }) {
  return (
    <div className="flex h-10 shrink-0 items-center border border-[#c3c3c3] bg-[#bce5f8] pl-[3px] text-sm">
      <svg width="30" height="30" viewBox="0 0 30 30" aria-hidden="true">
        <circle cx="15" cy="15" r="14.500" fill="#2583d2" stroke="#3a6c96" />
        <path d="M1 17a14 14 0 0 0 28 0z" fill="#3b9ce1" />
        <circle cx="15" cy="7" r="2" fill="#fff" />
        <path d="M15 11v13" stroke="#fff" strokeWidth="3.500" />
      </svg>
      <p className="pl-[7px] text-black">{text}</p>
      <button className="ml-auto h-[34px] rounded-md border border-[#d0cfcd] bg-white px-4 text-[#3d3d3d]">{action}</button>
      <button aria-label="Close infobar" className="flex w-7 items-center justify-center pl-[2px]">
        <Cross size={16} color="#0b4f8c" width={2} />
      </button>
    </div>
  );
}

/* ---------- sheet ---------- */

const columns = 'ABCDEFGHIJKLMNOPQRST'.split('');
const rows = Array.from({ length: 36 }, (_, i) => i + 1);

const cells: string[][] = [
  ['Purpose', 'Date', 'Spent ($)', 'Person'],
  ['Buy Shoes', '11/18/18', '40.00', 'Chris'],
  ['Buy Groceries', '11/19/18', '50.54', 'Chris'],
  ['Pay Utility Bills', '11/20/18', '60.00', 'Alex'],
  ['Purchase Books', '11/21/18', '30.75', 'Jordan'],
  ['Eat Out', '11/22/18', '25.50', 'Casey'],
  ['Buy Medicine', '11/23/18', '45.90', 'Morgan'],
  ['Get Pet Supplies', '11/24/18', '35.40', 'Jamie'],
];

function Cell({ row, col }: { row: number; col: number }) {
  const value = cells[row - 1]?.[col];

  if (row === 12 && col === 5) {
    return (
      <td className="relative border-r border-b border-[#c0c0c0] p-0">
        <div className="absolute -inset-px z-10 border-2 border-[#e95420]" />
        <div className="absolute -right-[3px] -bottom-[3px] z-10 size-[5px] bg-[#e95420]" />
        <svg width="18" height="28" viewBox="0 0 18 28" className="absolute top-3 left-[42px] z-20" aria-hidden="true">
          <path d="M1 1v22l5-4.500 3 7 4-1.500-3-7h7z" fill="#2b2b2b" stroke="#fff" strokeWidth="1.300" />
        </svg>
      </td>
    );
  }
  if (value === undefined) {
    return <td className="border-r border-b border-[#c0c0c0] p-0" />;
  }
  if (row === 1) {
    return (
      <td
        className={clsx(
          'overflow-hidden border-r border-b border-r-[#d8d6e6] p-0 text-center align-bottom font-bold leading-[18px]',
          col === 3 ? 'border-b-black' : 'border-b-[#d8d6e6]',
        )}
      >
        {value}
      </td>
    );
  }
  const overflows = col === 0 && value.length > 9;
  return (
    <td className="relative overflow-hidden border-r border-b border-[#d8d6e6] p-0 pl-px align-top leading-4 whitespace-nowrap">
      <div className={clsx('h-[17px] overflow-hidden', overflows && 'mr-1')}>{value}</div>
      {overflows && (
        <svg width="5" height="8" viewBox="0 0 5 8" className="absolute top-[5px] right-0" aria-hidden="true">
          <path d="M.5.5v7l4-3.500z" fill="#e00000" stroke="#000" />
        </svg>
      )}
    </td>
  );
}

function SheetGrid() {
  return (
    <div className="min-w-0 flex-1 overflow-hidden bg-white">
      <table className="w-[1841px] table-fixed border-separate border-spacing-0">
        <thead>
          <tr className="h-5 text-sm text-[#3d3d3d]">
            <th aria-label="Select all" className="w-[41px] border-r border-b border-[#919191] bg-[#fafafa] p-0" />
            {columns.map((name, i) => (
              <th
                key={name}
                scope="col"
                className={clsx(
                  'w-[90px] border-r border-b border-[#919191] p-0 leading-[19px]',
                  i === 5 ? 'bg-[#e95420] font-bold text-white' : 'bg-[#fafafa] font-normal',
                )}
              >
                {name}
              </th>
            ))}
          </tr>
        </thead>
        <tbody className="font-['DejaVu_Sans',sans-serif] text-[15px] text-[#3c4353]">
          {rows.map((row) => (
            <tr key={row} className={row > 1 && row < 9 ? 'h-[18px]' : 'h-[21px]'}>
              <th
                scope="row"
                className={clsx(
                  "border-r border-b border-[#919191] p-0 font-['Noto_Sans',sans-serif] text-sm leading-[17px]",
                  row === 12 ? 'bg-[#e95420] font-bold text-white' : 'bg-[#fafafa] font-normal text-[#3d3d3d]',
                )}
              >
                {row}
              </th>
              {columns.map((name, col) => (
                <Cell key={name} row={row} col={col} />
              ))}
            </tr>
          ))}
        </tbody>
      </table>
    </div>
  );
}

function SheetTabs() {
  return (
    <div className="flex h-[25px] shrink-0 items-center pl-[6px]">
      <button aria-label="First sheet" className="flex w-6 justify-center">
        <svg width="16" height="14" viewBox="0 0 16 14" fill="none" aria-hidden="true">
          <path d="M1 0v14M15.500 7H5" stroke="#f7a188" strokeWidth="2" />
          <path d="M8 2.500 3 7l5 4.500" stroke="#f7a188" strokeWidth="2" />
        </svg>
      </button>
      <button aria-label="Previous sheet" className="flex w-6 justify-center">
        <svg width="16" height="10" viewBox="0 0 16 10" aria-hidden="true">
          <path d="M0 0h1.500v10H0zM8.500 0v10L2 5zM15.500 0v10L9 5z" fill="#999" />
        </svg>
      </button>
      <button aria-label="Next sheet" className="flex w-7 justify-center">
        <svg width="16" height="10" viewBox="0 0 16 10" aria-hidden="true">
          <path d="M16 0h-1.500v10H16zM7.500 0v10L14 5zM.5 0v10L7 5z" fill="#999" />
        </svg>
      </button>
      <button aria-label="Last sheet" className="flex w-6 justify-center">
        <svg width="16" height="14" viewBox="0 0 16 14" fill="none" aria-hidden="true">
          <path d="M15 0v14M.5 7H11" stroke="#f7a188" strokeWidth="2" />
          <path d="m8 2.500 5 4.500-5 4.500" stroke="#f7a188" strokeWidth="2" />
        </svg>
      </button>
      <button aria-label="Add sheet" className="mx-[7px] flex w-[22px] justify-center">
        <svg width="17" height="17" viewBox="0 0 17 17" fill="none" aria-hidden="true">
          <path d="M3 1h7l4 4v10a1 1 0 0 1-1 1H3a1.500 1.500 0 0 1-1.500-1.500v-12A1.500 1.500 0 0 1 3 1z" fill="#fff" stroke="#3d3d3d" />
          <path d="M9.500 1v4.500H14" stroke="#3d3d3d" />
          <circle cx="12.500" cy="12.500" r="4" fill="#1f8b24" />
          <path d="M10 12.500h5M12.500 10v5" stroke="#fff" strokeWidth="1.500" />
        </svg>
      </button>
      <button role="tab" aria-selected="true" className="h-full w-[65px] border-b-[3px] border-[#919191] bg-white pt-[2px] text-[12px] font-bold text-[#3d3d3d]">
        Sheet1
      </button>
    </div>
  );
}

function SideBar() {
  return (
    <aside className="flex w-[58px] shrink-0 flex-col items-center gap-[7px] pt-[2px] pl-[2px]">
      <button aria-label="Sidebar settings" className="flex h-[35px] w-9 flex-col items-center justify-center gap-[3px]">
        <span className="h-px w-[10px] bg-[#2b2b2b]" />
        <span className="h-px w-[10px] bg-[#2b2b2b]" />
        <span className="h-px w-[10px] bg-[#2b2b2b]" />
      </button>
      <button aria-label="Properties" className="mt-1 flex h-[34px] w-9 items-center justify-center rounded-md border border-[#c0c0c0] bg-[#d6d6d6]">
        <Icon>
          <rect x="4" y="4" width="16" height="7" rx="2.500" fill="#e95420" />
          <rect x="4" y="13" width="16" height="7" rx="2.500" fill="#e95420" />
          <circle cx="16.500" cy="7.500" r="2.500" fill="#fff" />
          <circle cx="7.500" cy="16.500" r="2.500" fill="#fff" />
        </Icon>
      </button>
      <button aria-label="Styles" className="flex h-[35px] w-9 items-center justify-center">
        <Icon>
          <Glyph x={16} y={13} size={15}>A</Glyph>
          <path d="m3 8 6-4 8 9-3 4-3 1z" fill="#fff" stroke={MID} />
          <path d="m3 8 9 10M6 6l8 9" stroke={MID} />
          <path d="m7 16-5 5" stroke="#fc9684" strokeWidth="3" />
        </Icon>
      </button>
      <button aria-label="Gallery" className="flex h-[35px] w-9 items-center justify-center">
        <Icon>
          <rect x="2.500" y="3.500" width="16" height="13" rx="1" fill="#d85fc7" stroke={DARK} strokeWidth="1.200" />
          <rect x="5.500" y="7.500" width="16" height="13" rx="1" fill="#d85fc7" stroke="#2b2b2b" strokeWidth="1.200" />
          <path d="m9 18 2-4 2 1.500 1-2 3 4.500z" fill="#fff" />
          <circle cx="17" cy="12" r="1" fill="#fff" />
        </Icon>
      </button>
      <button aria-label="Navigator" className="flex h-[35px] w-9 items-center justify-center">
        <Icon>
          <circle cx="12" cy="12" r="9.500" fill="#4d7bea" stroke={DARK} />
          <path d="m7 17 3-7 3 3z" fill="#f4f4f4" />
          <path d="m17 7-7 3 3 4z" fill="#e8e8e8" />
          <path d="m17 7-4 2 2 2z" fill="#e0364c" />
        </Icon>
      </button>
      <button aria-label="Functions" className="flex h-[35px] w-9 items-center justify-center">
        <Icon>
          <path d="M13 4c-4-.5-5 .5-5 4v12M5 10h7" stroke="#1e1e1e" strokeWidth="2" />
          <path d="m14 14 6 6m0-6-6 6" stroke="#3d3d3d" strokeWidth="2" />
        </Icon>
      </button>
    </aside>
  );
}

function StatusBar() {
  const [zoom, setZoom] = useState(50);

  return (
    <footer className="flex h-[21px] shrink-0 items-stretch border-t border-[#bcbcbc] py-[3px] text-[12px] leading-4 text-[#3d3d3d]">
      <div className="w-[234px] border-r border-[#dadada] pl-[10px]">Sheet 1 of 1</div>
      <div className="w-[319px] border-r border-[#dadada]" />
      <div className="w-[272px] border-r border-[#dadada] pl-2">PageStyle_Sheet1</div>
      <div className="w-[272px] border-r border-[#dadada] text-center">English (Hong Kong)</div>
      <div className="w-[70px] border-r border-[#dadada]" />
      <div className="flex w-[29px] items-center justify-center border-r border-[#dadada]">
        <svg width="18" height="12" viewBox="0 0 18 12" fill="none" aria-label="Standard selection">
          <path d="M1 2.500h8v6H1z" stroke={RED} strokeWidth="1.400" />
          <path d="M13 .5h4m-4 11h4M15 .5v11" stroke="#1e1e1e" strokeWidth="1.200" />
        </svg>
      </div>
      <div className="flex w-[29px] items-center justify-center border-r border-[#dadada]">
        <svg width="10" height="12" viewBox="0 0 10 12" aria-label="Document saved">
          <path d="M3.500.5h3V5H9l-4 5-4-5h2.500z" fill="#a7d14c" stroke="#4b5a2a" />
          <path d="M1 11.500h8" stroke="#2b2b2b" />
        </svg>
      </div>
      <div className="w-[29px] border-r border-[#dadada]" />
      <div className="flex-1 border-r border-[#dadada] text-center">Average: ; Sum: 0</div>
      <div className="flex w-[143px] items-center justify-center gap-[6px] border-r border-[#dadada] pl-1">
        <button aria-label="Zoom out" className="h-[2px] w-2 bg-[#5a5a5a]" />
        <input
          type="range"
          aria-label="Zoom"
          value={zoom}
          onChange={(e) => setZoom(Number(e.target.value))}
          className="h-[2px] w-[97px] appearance-none bg-[#999] [&::-webkit-slider-thumb]:size-[9px] [&::-webkit-slider-thumb]:appearance-none [&::-webkit-slider-thumb]:rounded-full [&::-webkit-slider-thumb]:border [&::-webkit-slider-thumb]:border-[#5a5a5a] [&::-webkit-slider-thumb]:bg-white"
        />
        <button aria-label="Zoom in">
          <svg width="9" height="9" viewBox="0 0 9 9" aria-hidden="true">
            <path d="M0 4.500h9M4.500 0v9" stroke="#5a5a5a" strokeWidth="2" />
          </svg>
        </button>
      </div>
      <button className="w-12 text-center">100%</button>
    </footer>
  );
}

export default function App() {
  const [font, setFont] = useState('Arial');
  const [fontSize, setFontSize] = useState('10 pt');

  return (
    <div className="flex h-screen flex-col overflow-hidden font-['Noto_Sans',sans-serif]">
      <TopBar />
      <div className="flex min-h-0 flex-1">
        <Dock />
        <main className="flex min-w-0 flex-1 flex-col bg-[#fafafa]">
          <TitleBar />
          <MenuBar />

          <div className="flex h-[38px] shrink-0 items-center pl-[3px]">
            <ToolGroups groups={standardTools} />
          </div>

          <div className="flex h-[39px] shrink-0 items-center pl-1">
            <div className="relative flex h-[34px] w-[221px] items-center rounded-md border border-[#c3c3c3] bg-white">
              <select
                aria-label="Font name"
                value={font}
                onChange={(e) => setFont(e.target.value)}
                className="h-full w-full appearance-none pl-2 text-sm text-black outline-none"
              >
                <option>Arial</option>
              </select>
              <span className="pointer-events-none absolute inset-y-0 right-0 flex w-[35px] items-center justify-center border-l border-[#c3c3c3]">
                <Chevron />
              </span>
            </div>
            <div className="relative mr-1 ml-2 flex h-[34px] w-[101px] items-center rounded-md border border-[#c3c3c3] bg-white">
              <select
                aria-label="Font size"
                value={fontSize}
                onChange={(e) => setFontSize(e.target.value)}
                className="h-full w-full appearance-none pl-2 text-sm text-black outline-none"
              >
                <option>10 pt</option>
              </select>
              <span className="pointer-events-none absolute inset-y-0 right-0 flex w-[35px] items-center justify-center border-l border-[#c3c3c3]">
                <Chevron />
              </span>
            </div>
            <div className="mr-[2px] h-[33px] w-px bg-[#dadada]" />
            <ToolGroups groups={formattingTools} />
          </div>

          <div className="flex min-h-0 flex-1">
            <div className="flex min-w-0 flex-1 flex-col border-r border-[#bcbcbc]">
              <FormulaBar />
              <InfoBar text="Help us make LibreOffice even better!" action="Get involved" />
              <InfoBar text="Your donations support our worldwide community." action="Donate" />
              <div className="flex min-h-0 flex-1">
                <SheetGrid />
                <div className="flex w-3 shrink-0 flex-col items-center">
                  <div className="flex h-[5px] w-full items-center justify-center bg-[#bcbcbc]">
                    <span className="h-px w-[6px] bg-black" />
                  </div>
                  <div className="mt-[5px] h-[349px] w-[6px] rounded-full bg-[#8b8b8b]" />
                </div>
              </div>
              <div className="flex h-3 shrink-0 items-center justify-between pr-3 pl-1">
                <div className="h-[6px] w-[836px] rounded-full bg-[#8b8b8b]" />
                <div className="flex h-full w-[5px] items-center justify-center bg-[#bcbcbc]">
                  <span className="h-[6px] w-px bg-black" />
                </div>
              </div>
              <SheetTabs />
            </div>
            <div className="relative flex">
              <button aria-label="Hide sidebar" className="absolute top-[410px] -left-px flex h-[73px] w-[7px] items-center justify-center bg-[#999]">
                <svg width="5" height="8" viewBox="0 0 5 8" aria-hidden="true">
                  <path d="M0 0v8l5-4z" fill="#fff" />
                </svg>
              </button>
              <SideBar />
            </div>
          </div>
          <StatusBar />
        </main>
      </div>
    </div>
  );
}
